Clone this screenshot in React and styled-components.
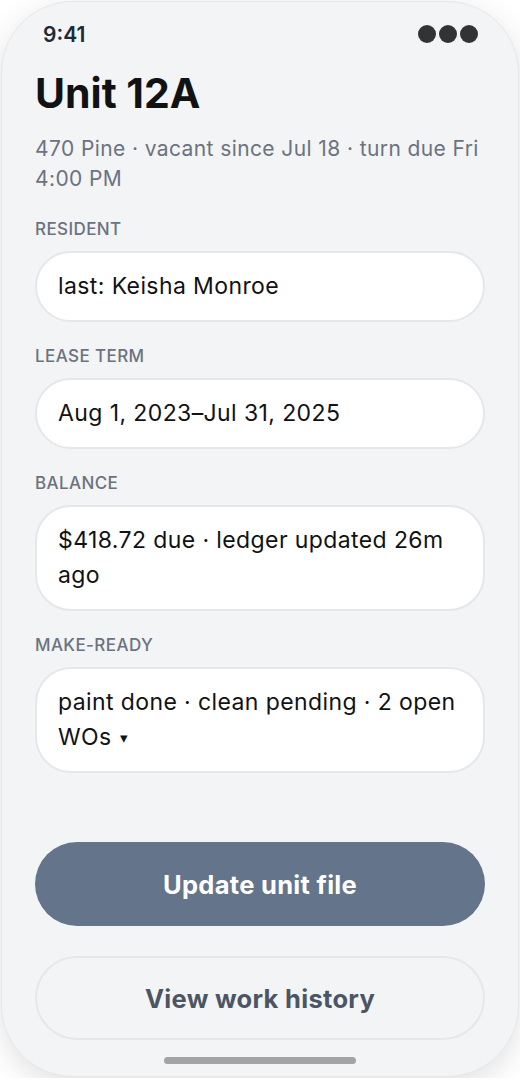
import React from "react";
import styled, { createGlobalStyle } from "styled-components";

const GlobalStyle = createGlobalStyle`
  html, body {
    margin: 0;
    padding: 0;
    background: #ffffff;
  }
  body {
    font-family: "Inter", "Noto Sans", sans-serif;
    -webkit-font-smoothing: antialiased;
  }
`;

const Frame = styled.div`
  box-sizing: border-box;
  width: 518px;
  height: 1076px;
  margin: 1px;
  background: #f3f4f6;
  border: 1px solid #e5e7eb;
  border-radius: 72px;
  box-shadow: 0 8px 30px rgba(0, 0, 0, 0.12);
  display: flex;
  flex-direction: column;
  padding: 18px 33px 12px;
  overflow: hidden;
`;

const StatusBar = styled.div`
  display: flex;
  align-items: center;
  justify-content: space-between;
  height: 28px;
  padding: 0 7px 0 8px;
`;

const Time = styled.span`
  font-size: 21px;
  font-weight: 600;
  color: #1f2937;
`;

const Dots = styled.div`
  display: flex;
  gap: 3px;
`;

const Dot = styled.span`
  width: 18px;
  height: 18px;
  border-radius: 50%;
  background: #333336;
`;

const Title = styled.h1`
  margin: 21px 0 0;
  font-size: 41px;
  line-height: 48px;
  font-weight: 700;
  color: #111214;
`;

const Subtitle = styled.p`
  margin: 17px 0 0;
  font-size: 21px;
  line-height: 30px;
  letter-spacing: 0.4px;
  color: #6b7280;
`;

const Fields = styled.div`
  display: flex;
  flex-direction: column;
  gap: 23px;
  margin-top: 24px;
`;

const Field = styled.div`
  display: flex;
  flex-direction: column;
  gap: 11px;
`;

const Label = styled.div`
  font-size: 17px;
  line-height: 22px;
  font-weight: 500;
  color: #6b7280;
  letter-spacing: 0.4px;
  text-transform: uppercase;
`;

const Value = styled.div`
  box-sizing: border-box;
  background: #ffffff;
  border: 2px solid #e5e7eb;
  border-radius: 36px;
  padding: 16px 22px 16px 21px;
  font-size: 23px;
  line-height: 35px;
  letter-spacing: 0.4px;
  color: #111214;
`;

const Caret = styled.span`
  display: inline-block;
  font-size: 15px;
  line-height: 1;
  margin-left: 8px;
  vertical-align: 2px;
`;

const Actions = styled.div`
  margin-top: auto;
  display: flex;
  flex-direction: column;
  gap: 30px;
`;

const Button = styled.button`
  box-sizing: border-box;
  height: 84px;
  width: 100%;
  border-radius: 42px;
  font-family: inherit;
  font-size: 25.5px;
  font-weight: 700;
  letter-spacing: 0.3px;
  cursor: pointer;
  background: ${(p) => (p.$primary ? "#64748b" : "transparent")};
  color: ${(p) => (p.$primary ? "#ffffff" : "#4b5563")};
  border: ${(p) => (p.$primary ? "none" : "2px solid #e5e7eb")};
`;

const HomeBar = styled.div`
  align-self: center;
  width: 192px;
  height: 7px;
  border-radius: 4px;
  background: #a3a3a3;
  margin-top: 17px;
`;

const fields = [
  { label: "Resident", value: "last: Keisha Monroe" },
  { label: "Lease term", value: "Aug 1, 2023–Jul 31, 2025" },
  { label: "Balance", value: "$418.72 due · ledger updated 26m ago" },
  { label: "Make-ready", value: "paint done · clean pending · 2 open WOs", caret: true },
];

export default function App() {
  return (
    <>
      <GlobalStyle />
      <Frame>
        <StatusBar>
          <Time>9:41</Time>
          <Dots>
            <Dot />
            <Dot />
            <Dot />
          </Dots>
        </StatusBar>
        <Title>Unit 12A</Title>
        <Subtitle>470 Pine · vacant since Jul 18 · turn due Fri 4:00 PM</Subtitle>
        <Fields>
          {fields.map((f) => (
            <Field key={f.label}>
              <Label>{f.label}</Label>
              <Value>
                {f.value}
                {f.caret && <Caret>▾</Caret>}
              </Value>
            </Field>
          ))}
        </Fields>
        <Actions>
          <Button $primary>Update unit file</Button>
          <Button>View work history</Button>
        </Actions>
        <HomeBar />
      </Frame>
    </>
  );
}
